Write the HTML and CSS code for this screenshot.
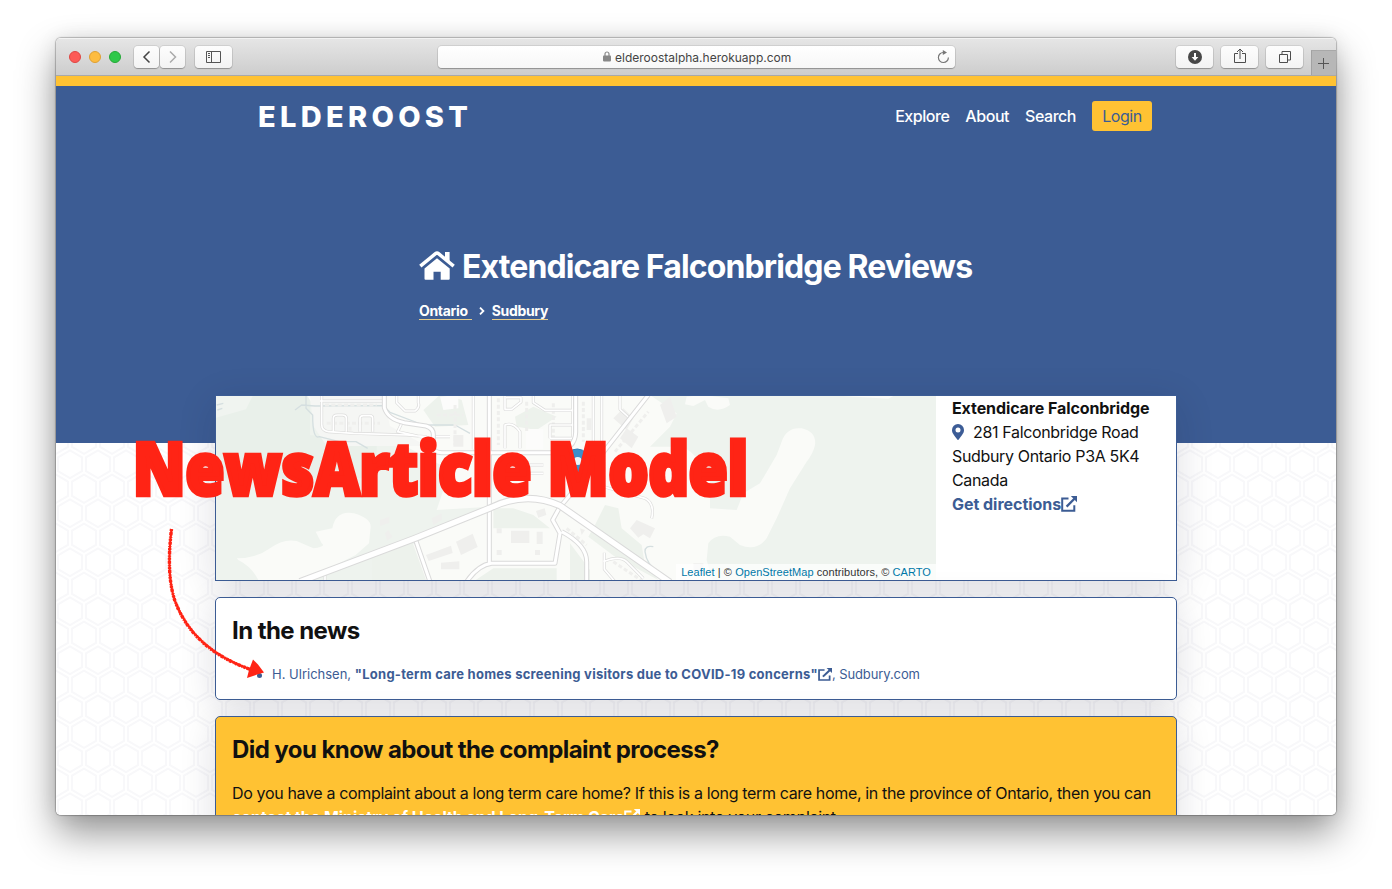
FILE: index.html
```html
<!DOCTYPE html>
<html lang="en">
<head>
<meta charset="utf-8">
<title>Extendicare Falconbridge Reviews</title>
<link rel="stylesheet" href="styles.css">
</head>
<body>
<svg class="defs" width="0" height="0" aria-hidden="true">
  <symbol id="ext" viewBox="0 0 16 16"><path d="M7.500 2.500H1.200v12.300h12.100V9.200" fill="none" stroke="currentColor" stroke-width="2"/><path d="M5.600 10.600 13.400 2.800" stroke="currentColor" stroke-width="2.300"/><path d="M9.800 0H16v6.200z" fill="currentColor"/></symbol>
</svg>
<div class="window">
  <header class="toolbar">
    <div class="lights"><i class="light red"></i><i class="light amber"></i><i class="light green"></i></div>
    <div class="history">
      <span class="btn half"><svg width="10" height="14" viewBox="0 0 10 14"><path d="M7.500 1.500 2 7l5.500 5.500" fill="none" stroke="#444" stroke-width="1.500"/></svg></span>
      <span class="btn half"><svg width="10" height="14" viewBox="0 0 10 14"><path d="M2 1.500 7.500 7 2 12.500" fill="none" stroke="#aaa" stroke-width="1.500"/></svg></span>
    </div>
    <span class="btn side"><svg width="15" height="12" viewBox="0 0 15 12"><path d="M.5.5h14v11H.5zM5.500.5v11M2 2.500h2M2 4.500h2M2 6.500h2" fill="none" stroke="#555"/></svg></span>
    <div class="address">
      <svg class="lock" width="8" height="11" viewBox="0 0 8 11"><path d="M2 5V3a2 2 0 0 1 4 0v2" fill="none" stroke="#888" stroke-width="1.200"/><rect y="4.600" width="8" height="5.800" rx=".8" fill="#888"/></svg>
      <span class="url">elderoostalpha.herokuapp.com</span>
      <svg class="reload" width="13" height="14" viewBox="0 0 13 14"><path d="M8 2.500H6.300A5 5 0 1 0 11.400 7.500" fill="none" stroke="#777" stroke-width="1.200"/><path d="M5.800 0 10 2.500 5.800 5z" fill="#777"/></svg>
    </div>
    <div class="actions">
      <span class="btn"><svg width="14" height="14" viewBox="0 0 14 14"><circle cx="7" cy="7" r="7" fill="#484848"/><path d="M7 3v6" stroke="#fff" stroke-width="2"/><path d="M3.600 7h6.800L7 10.800z" fill="#fff"/></svg></span>
      <span class="btn"><svg class="share" width="12" height="16" viewBox="0 0 12 16"><path d="M4 5.500H.5v9h11v-9H8M6 11V1M3 4l3-3 3 3" fill="none" stroke="#4d4d4d"/></svg></span>
      <span class="btn"><svg width="12" height="12" viewBox="0 0 12 12"><path d="M.5 3.500h8v8h-8zM3 3V.5h8.500V9H9" fill="none" stroke="#4d4d4d"/></svg></span>
    </div>
    <span class="plus"><svg width="11" height="11" viewBox="0 0 11 11"><path d="M5.500 0v11M0 5.500h11" stroke="#555"/></svg></span>
  </header>
  <div class="page">
    <svg class="honeycomb" width="1280" height="739" aria-hidden="true">
      <defs><pattern id="hex" width="28" height="49" patternUnits="userSpaceOnUse" patternTransform="translate(0 21)"><path fill="#f8f8fa" fill-rule="evenodd" d="M13.990 9.250l13 7.500v15l-13 7.500L1 31.750v-15l12.990-7.500zM3 17.900v12.700l10.990 6.340 11-6.350V17.900l-11-6.340L3 17.900zM0 15l12.980-7.500V0h-2v6.350L0 12.690v2.300zm0 18.500L12.980 41v8h-2v-6.850L0 35.810v-2.300zM15 0v7.500L27.990 15H28v-2.310h-.01L17 6.350V0h-2zm0 49v-8l12.990-7.500H28v2.310h-.01L17 42.150V49h-2z"/></pattern></defs>
      <rect width="1280" height="739" fill="url(#hex)"/>
    </svg>
    <div class="hero">
      <nav class="nav">
        <span class="brand">ELDEROOST</span>
        <div class="links"><a>Explore</a><a>About</a><a>Search</a><a class="login">Login</a></div>
      </nav>
      <div class="title">
        <h1><svg width="36" height="29" viewBox="0 0 36 29"><path d="M1.300 15.200 16.500 2.700Q18 1.500 19.500 2.700L34.700 15.200" fill="none" stroke="#fff" stroke-width="3.500"/><path d="M26 1h4.600v10L26 7.200z" fill="#fff"/><path d="M18 7.200 30.700 17.600v10.200q0 1-1 1h-8v-8h-7.200v8h-8q-1 0-1-1V17.600z" fill="#fff"/></svg><span>Extendicare Falconbridge Reviews</span></h1>
        <p class="crumbs"><a class="region">Ontario</a><svg width="6" height="8" viewBox="0 0 6 8"><path d="m1 .6 3.400 3.400L1 7.400" fill="none" stroke="#fff" stroke-width="1.800"/></svg><a>Sudbury</a></p>
      </div>
    </div>
    <main class="cards">
      <section class="card place">
        <div class="map">
          <svg width="720" height="184" viewBox="0 0 720 184">
            <rect width="720" height="184" fill="#eef3ee"/>
            <g transform="translate(-6 -11) scale(.33333)" stroke-linejoin="round">
              <path d="M0 30H300V150L500 170V280H0z" fill="#e9f0ea"/>
              <path d="M18 33h110l-20 40-90 25z" fill="#f0f4f0"/>
              <path d="M290 30H1320l80 55-20 40 -60 60 100 0q50 30 80 90l0 95 80 5 20-50 50-30 50-85 15-40q15-45 60-40 45 10 40 50-5 25-25 50l-50 80-40 90-30 60q-30 40-80 20l-30-25q-45-10-65 20l-5 50 20 70H730l110-180 6 120 190-10 5 60H485l50-80 60-20 115-60 130-60-160 10 40-120-150-80-80-20-60-10-55 0-35-40z" fill="#fafbf8"/>
              <path d="M80 520q60 0 100-30 40-30 80-22l50 22q40-5 25-15l-18-35 50-10q10-55 65-45 50 15 50 40l-5 50-40 35-150 75H145q-20-40-60-60z" fill="#fafbf8"/>
              <path d="M300 33H520l20 90 110 60H350l-40-60z" fill="#f5f6f4"/>
              <path d="M640 75l55-50 60 20 20 75-100 5zM915 95l55-30 70 30-60 40-60-10zM485 520l120-55 45 125H485zM850 370l60 0 60 20 50 40H850zM850 550h190v40H790zM1155 420l30-60 40 10 10 60 60 50 10 60 40 45-130-70-80-60zM1080 475l60 80v40h-60z" fill="#edf2ec"/>
              <path d="M690 35l55-5v40l-45 5zM948 132h52v60h-52z" fill="#fcfcfb"/>
              <path d="M1430 35l50-5 75 10 5 20q-35 25-65 5l-10-20-35 18-25-5zM1900 33h150l-15 8z" fill="#fafbf8"/>
              <path d="M288 30v40l20 20q0 75 20 65l60 15h50l35 20M255 75l20-15 40 3 205-1 20 20 100 38h95l45 25M20 60l20-5M22 75l15-5M1330 485q-25-5-25 15 5 40 40 60" fill="none" stroke="#d5dfe0" stroke-width="4"/>
              <path fill="#efefed" d="m648 510 75-28 5 22-72 24zM738 470l50-24 15 40-50 24zM693 533l55-4v24h-55zM903 437h55v37h-55zM980 440h18v37h-18zM978 378l26-8 5 20-24 8zM860 430h15v15h-15zM860 495h15v15h-15zM975 495h15v15h-15zM1260 430l20-25 55 25-15 30-20-12-15 10zM1230 160l20-30 35 25-20 35zM1210 100l30-30 30 30-20 35zM1110 430l15 5-10 15zM1130 100h14v35h-14zM1450 535h30v20h-30zM510 405l28-10v18l-28 10zM525 445l10-10 12 20-15 12zM665 400l30-15v20l-25 15zM730 150h30v35h-30zM1350 60l30-25 20 60-30 20z"/>
              <path fill="none" stroke="#efefed" stroke-width="9" stroke-dasharray="12 7" d="M345 60H500M350 115h160M420 125v15M680 90h80M735 60v120M865 40v140M950 50v90M1030 55v120M1120 50v120M900 215v90M1215 200l100-120M1210 530l90 60M1070 430l60 50"/>
              <g fill="none">
                <path stroke="#dcdcdb" stroke-width="9" d="M335 33v85q0 20 20 22l75 5 160 5 60 5M370 140v-40q0-10 12-10h15q12 0 12 10v40M450 140v-40q0-8 10-8h20q8 0 8 8v40M330 48h190M560 33v20l25 25h30q15-10 10-25V33M575 115l-12 25 90 20M675 155h45M885 33v40h20l28-22V38h-45M970 33v20l35 23h95M1020 160v-40h75M1020 160h75M885 190v-70q25-10 45 20v50M790 33v160M1000 265h-80M900 240h100M1088 33v142M1150 33v270M1230 33v40l25 23M1175 33v180M1180 305l125 35q30 15 20 60M1183 503v50l30 35M1180 530q50-20 70 0l50 50M345 570v20"/>
                <path stroke="#fff" stroke-width="5" d="M335 33v85q0 20 20 22l75 5 160 5 60 5M370 140v-40q0-10 12-10h15q12 0 12 10v40M450 140v-40q0-8 10-8h20q8 0 8 8v40M330 48h190M560 33v20l25 25h30q15-10 10-25V33M575 115l-12 25 90 20M675 155h45M885 33v40h20l28-22V38h-45M970 33v20l35 23h95M1020 160v-40h75M1020 160h75M885 190v-70q25-10 45 20v50M790 33v160M1000 265h-80M900 240h100M1088 33v142M1150 33v270M1230 33v40l25 23M1175 33v180M1180 305l125 35q30 15 20 60M1183 503v50l30 35M1180 530q50-20 70 0l50 50M345 570v20"/>
              </g>
              <g fill="none" stroke="#dadada" stroke-width="15">
                <path d="M523 33v35q10 35 60 45l65 10q22 7 22 25v40q3 15 25 15h340q60-10 62-60V33M1150 240l165-210M838 33v500M615 460l45 130M1050 365l-22 40 22 40-15 90-190 0q-40 5-75 55M1055 360l80-95M1055 440q75 40 75 90v60"/>
                <path stroke="#fff" stroke-width="9" d="M523 33v35q10 35 60 45l65 10q22 7 22 25v40q3 15 25 15h340q60-10 62-60V33M1150 240l165-210M838 33v500M615 460l45 130M1050 365l-22 40 22 40-15 90-190 0q-40 5-75 55M1055 360l80-95M1055 440q75 40 75 90v60"/>
                <path stroke-width="22" d="M270 590 615 460 838 370q110-55 212-8l330 230"/>
                <path stroke="#fff" stroke-width="16" d="M270 590 615 460 838 370q110-55 212-8l330 230"/>
              </g>
              <path d="m1098 310 22-22 10-20-10 40z" fill="#777" opacity=".5"/>
              <path d="M1095 312q-5-30-18-48-10-15-10-30 2-42 35-42 34 2 36 42 0 15-12 33-18 25-21 45z" fill="#3d8fcb" stroke="#2f79b4" stroke-width="3"/><circle cx="1103" cy="228" r="12" fill="#eef5fa"/>
            </g>
          </svg>
          <div class="credit"><a>Leaflet</a> | © <a>OpenStreetMap</a> contributors, © <a>CARTO</a></div>
        </div>
        <address class="info">
          <strong>Extendicare Falconbridge</strong><br>
          <svg class="pin" width="12" height="16" viewBox="0 0 12 16"><path fill-rule="evenodd" d="M6 0a6 6 0 0 1 6 6c0 3-1.400 4-5.300 9.600a.9.9 0 0 1-1.400 0C1.400 10 0 9 0 6a6 6 0 0 1 6-6zm0 3.500a2.500 2.500 0 1 0 0 5 2.500 2.500 0 0 0 0-5z" fill="#3c5c96"/></svg>281 Falconbridge Road<br>
          Sudbury Ontario P3A 5K4<br>Canada<br>
          <a class="directions"><b>Get directions</b><svg width="16" height="16"><use href="#ext"/></svg></a>
        </address>
      </section>
      <section class="card news">
        <h2>In the news</h2>
        <ul><li><span>H. Ulrichsen, </span><b>"Long-term care homes screening visitors due to COVID-19 concerns"</b><svg width="14" height="13" viewBox="0 0 16 16" preserveAspectRatio="none"><use href="#ext" width="16" height="16"/></svg><span class="source">, Sudbury.com</span></li></ul>
      </section>
      <section class="card process">
        <h2>Did you know about the complaint process?</h2>
        <p>Do you have a complaint about a long term care home? If this is a long term care home, in the province of Ontario, then you can<br><a><b>contact the Ministry of Health and Long-Term Care</b><svg width="16" height="16"><use href="#ext"/></svg></a> <span class="tail">to look into your complaint.</span></p>
      </section>
    </main>
  </div>
</div>
<svg class="annotation" width="1392" height="889" viewBox="0 0 1392 889">
  <text x="133" y="494.500" textLength="615" lengthAdjust="spacingAndGlyphs">NewsArticle Model</text>
  <path class="stroke" d="M171.500 529Q166 575 175 601C187 633 211 656 252 670"/>
  <path class="stroke rough" d="M171.500 529Q166 575 175 601C187 633 211 656 252 670"/>
  <path d="M253 659.500l3 3 2 2 6 8-7 2-4 1.500-6 2 2-8z" fill="#ff2415"/>
</svg>
</body>
</html>
```
FILE: styles.css
```css
* { box-sizing: border-box; }
body { margin: 0; height: 889px; overflow: hidden; position: relative; display: flow-root; background: #fff; color: #111; font: 16px/24px Inter, "Liberation Sans", sans-serif; }
svg { display: block; flex: none; }
.defs { position: absolute; }
.window { width: 1280px; height: 777px; margin: 38px 0 0 56px; border-radius: 5px; overflow: hidden; display: flex; flex-direction: column; box-shadow: 0 0 1px 1px rgba(0,0,0,.24), 0 18px 38px rgba(0,0,0,.42), 0 0 20px rgba(0,0,0,.08); }
.toolbar { height: 38px; display: flex; align-items: center; background: linear-gradient(#e6e6e6, #cdcdcd); border-bottom: 1px solid #a9a9a9; box-shadow: inset 0 1px #f3f3f3; flex: none; padding-left: 13px; }
.lights { display: flex; gap: 8px; margin-right: 13px; }
.light { width: 12px; height: 12px; border-radius: 50%; border: 1px solid; }
.red { background: #fc5b57; border-color: #df4643; }
.amber { background: #fdbc40; border-color: #dfa033; }
.green { background: #2fc84a; border-color: #25a837; }
.history { display: flex; gap: 1px; margin-right: 10px; }
.btn { width: 37px; height: 22px; border-radius: 4px; background: linear-gradient(#fdfdfd, #f3f3f3); box-shadow: 0 0 0 1px rgba(0,0,0,.08), 0 1px 1px rgba(0,0,0,.25); display: flex; align-items: center; justify-content: center; }
.half { width: 25px; }
.address { margin-left: 206px; width: 517px; height: 22px; border-radius: 4px; background: linear-gradient(#fff, #f7f7f7); box-shadow: 0 0 0 1px rgba(0,0,0,.08), 0 1px 1px rgba(0,0,0,.25); display: flex; align-items: center; }
.lock { margin: 0 4px 0 165px; }
.url { font-size: 12px; color: #444; flex: 1; padding-top: 2px; }
.reload { margin-right: 5px; }
.actions { display: flex; gap: 8px; margin-left: 221px; }
.share { margin-top: -2px; }
.plus { width: 25px; height: 25px; background: #b7b7b7; border-left: 1px solid #a2a2a2; border-top: 1px solid #a8a8a8; display: flex; align-items: center; justify-content: center; align-self: flex-end; margin-left: auto; padding-right: 1px; }
.page { flex: 1; position: relative; overflow: hidden; background: #fff; display: flex; flex-direction: column; }
.honeycomb { position: absolute; inset: 0; }
.hero { position: relative; height: 367px; flex: none; border-top: 10px solid #ffc233; background: #3c5c94; color: #fff; }
.nav { display: flex; justify-content: space-between; align-items: center; padding: 15px 184px 0 202px; height: 45px; }
.brand { font-size: 29px; font-weight: 800; letter-spacing: 4.300px; padding-top: 2px; }
.links { display: flex; align-items: center; gap: 16px; font-weight: 500; letter-spacing: -.46px; }
.login { background: #ffc233; color: #3c5c94; border-radius: 3px; width: 60px; height: 30px; display: flex; align-items: center; justify-content: center; font-weight: 400; }
.title { padding: 116px 0 0 363px; }
h1 { margin: 0; display: flex; align-items: center; gap: 7px; font-size: 32px; line-height: 40px; font-weight: 700; letter-spacing: -.87px; }
.title h1 { padding: 0; }
.title h1 svg { margin-bottom: 3px; }
.crumbs { margin: 15px 0 0; display: flex; align-items: center; font-size: 14px; line-height: 18px; font-weight: 700; letter-spacing: -.33px; }
.crumbs a { border-bottom: 1px solid #e6cd8a; height: 18px; }
.crumbs .region { padding-right: 4px; }
.crumbs svg { margin: 0 7px; }
.cards { width: 962px; margin: -48px 0 0 159px; display: flex; flex-direction: column; gap: 16px; position: relative; }
.card { border: 1px solid #3c5c94; border-radius: 5px; background: #fff; box-shadow: 0 8px 36px rgba(20,20,50,.14); letter-spacing: -.345px; }
.place { height: 186px; border-radius: 0; display: flex; }
.map { width: 720px; position: relative; }
.credit { position: absolute; right: 0; bottom: 0; height: 16px; padding: 0 5px; background: rgba(255,255,255,.7); font: 11px/16px "Liberation Sans", sans-serif; letter-spacing: .065px; color: #333; white-space: nowrap; }
.credit a { color: #0078a8; }
.info { font-style: normal; padding: 0 0 0 16px; white-space: nowrap; }
.info strong { letter-spacing: -.1px; }
.pin { display: inline-block; vertical-align: -2px; margin-right: 9px; }
.directions { color: #3c5c94; display: flex; align-items: center; letter-spacing: -.03px; }
h2 { margin: 0; padding-top: 1px; font-size: 24px; line-height: 32px; font-weight: 700; letter-spacing: -.57px; }
.news { height: 103px; padding: 16px; }
.news ul { margin: 17px 0 0; padding: 0 0 0 40px; color: #3c5c94; font-size: 13px; line-height: 20px; letter-spacing: 0; list-style: none; }
.news b { letter-spacing: .255px; }
.news .source { letter-spacing: -.1px; }
.news li { display: flex; align-items: center; white-space: pre; position: relative; }
.news li::before { content: ""; position: absolute; left: -15px; top: 9px; width: 5px; height: 5px; border-radius: 50%; background: #3c5c94; }
.process { background: #ffc233; padding: 16px; height: 200px; }
.process p { margin: 15px 0 0; white-space: nowrap; }
.process b { letter-spacing: -.06px; }
.process .tail { letter-spacing: -.34px; }
.process a { color: #fff; }
.process a svg { display: inline-block; vertical-align: -2px; }
.annotation { position: absolute; left: 0; top: 0; }
.annotation text { font: 800 72px "Open Sans", sans-serif; fill: #ff2415; stroke: #ff2415; stroke-width: 4.500px; stroke-linejoin: miter; }
.stroke { fill: none; stroke: #ff2415; stroke-width: 2.200px; }
.rough { stroke-width: 3.400px; stroke-dasharray: 2 1 3 1.500 1 1; }
```
